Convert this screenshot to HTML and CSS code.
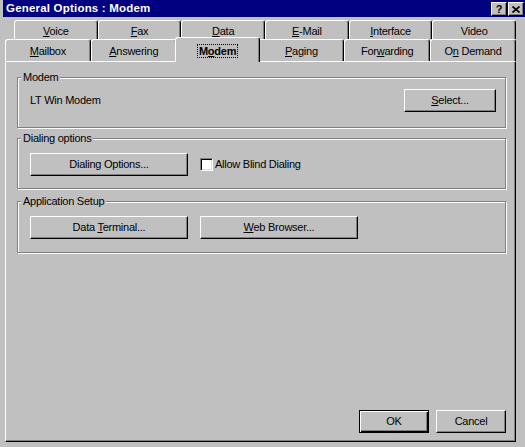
FILE: index.html
```html
<!DOCTYPE html>
<html>
<head>
<meta charset="utf-8">
<title>General Options : Modem</title>
<link rel="stylesheet" href="styles.css">
</head>
<body>
<div class="window">
  <div class="titlebar">
    <span class="title">General Options : Modem</span>
    <div class="tb-buttons">
      <span class="tb-btn">?</span>
      <span class="tb-btn"><svg width="8" height="7" viewBox="0 0 8 7"><path d="M0.5 0.5 L7.5 6.5 M7.5 0.5 L0.5 6.5" stroke="#000" stroke-width="1.6" fill="none"/></svg></span>
    </div>
  </div>
  <div class="tabs">
    <div class="tabrow back">
      <div class="tab"><u>V</u>oice</div>
      <div class="tab"><u>F</u>ax</div>
      <div class="tab"><u>D</u>ata</div>
      <div class="tab"><u>E</u>-Mail</div>
      <div class="tab"><u>I</u>nterface</div>
      <div class="tab">Video</div>
    </div>
    <div class="tabrow front">
      <div class="tab"><u>M</u>ailbox</div>
      <div class="tab"><u>A</u>nswering</div>
      <div class="tab active"><span class="focus">M<u>o</u>dem</span></div>
      <div class="tab"><u>P</u>aging</div>
      <div class="tab">For<u>w</u>arding</div>
      <div class="tab">O<u>n</u> Demand</div>
    </div>
  </div>
  <div class="panel">
    <fieldset class="group g1">
      <legend>Modem</legend>
      <div class="row spread">
        <span class="label">LT Win Modem</span>
        <button class="btn btn-select"><span><u>S</u>elect...</span></button>
      </div>
    </fieldset>
    <fieldset class="group g2">
      <legend>Dialing options</legend>
      <div class="row">
        <button class="btn btn-wide"><span>Dialing Options...</span></button>
        <label class="check"><span class="box"></span><span>Allow Blind Dialing</span></label>
      </div>
    </fieldset>
    <fieldset class="group g3">
      <legend>Application Setup</legend>
      <div class="row">
        <button class="btn btn-wide"><span>Data <u>T</u>erminal...</span></button>
        <button class="btn btn-wide"><span><u>W</u>eb Browser...</span></button>
      </div>
    </fieldset>
    <div class="footer">
      <button class="btn btn-footer btn-default"><span>OK</span></button>
      <button class="btn btn-footer"><span>Cancel</span></button>
    </div>
  </div>
</div>
</body>
</html>
```
FILE: styles.css
```css
* { box-sizing: border-box; }

body {
  margin: 0;
  background: #c0c0c0;
  font-family: "Liberation Sans", Arial, sans-serif;
  font-size: 11px;
  line-height: 13px;
  letter-spacing: -0.25px;
  color: #000;
}

.window {
  width: 525px;
  height: 447px;
  overflow: hidden;
  display: flex;
  flex-direction: column;
}

/* Title bar */
.titlebar {
  height: 17px;
  margin-left: 3px;
  background: #000080;
  color: #fff;
  display: flex;
  justify-content: space-between;
  align-items: flex-start;
  padding: 2px 1px 0 3px;
}

.title {
  font-weight: bold;
  font-size: 11.5px;
  line-height: 13px;
  letter-spacing: 0.2px;
}

.tb-buttons {
  display: flex;
  gap: 1px;
}

.tb-btn {
  width: 16px;
  height: 14px;
  background: #c0c0c0;
  border: 1px solid;
  border-color: #fff #000 #000 #fff;
  box-shadow: inset -1px -1px #808080;
  display: flex;
  align-items: center;
  justify-content: center;
  color: #000;
  font-weight: bold;
  font-size: 11px;
  line-height: 11px;
  letter-spacing: 0;
}

/* Tabs */
.tabs {
  display: flex;
  flex-direction: column;
  margin-top: 3px;
}

.tabrow {
  display: flex;
}

.tabrow.back {
  margin-left: 14px;
  width: 502px;
  height: 19px;
}

.tabrow.front {
  margin-left: 5px;
  width: 511px;
  height: 22px;
}

.tab {
  flex: 1 1 0;
  border: 1px solid;
  border-bottom: 0;
  border-color: #fff #000 #000 #fff;
  border-radius: 3px 3px 0 0;
  box-shadow: inset -1px 0 #808080;
  background: #c0c0c0;
  text-align: center;
  padding-top: 4px;
  white-space: nowrap;
}

.front .tab {
  padding-top: 5px;
}

.front .tab.active {
  margin: -2px -2px -1px;
  position: relative;
  z-index: 1;
  padding-top: 6px;
  font-weight: bold;
}

.focus {
  display: inline-block;
  border: 1px dotted #000;
  padding: 0 1px;
  line-height: 12px;
}

/* Panel */
.panel {
  margin-left: 5px;
  width: 511px;
  height: 381px;
  border: 1px solid;
  border-color: #fff #000 #000 #fff;
  box-shadow: inset -1px -1px #808080;
  padding-top: 9px;
  display: flex;
  flex-direction: column;
}

.group {
  margin: 0 9px 0 11px;
  padding: 0;
  min-width: 0;
  border: 1px solid #808080;
  box-shadow: 1px 1px 0 #fff, inset 1px 1px 0 #fff;
}

.group legend {
  margin-left: 3px;
  padding: 0 2px;
  background: #c0c0c0;
  line-height: 13px;
}

.g2 { margin-top: 4px; }
.g3 { margin-top: 6px; }

.row {
  display: flex;
  align-items: center;
  gap: 12px;
  padding: 8px 9px 12px 12px;
}

.g1 .row {
  justify-content: space-between;
  padding: 5px 9px 15px 12px;
}

.g3 .row {
  padding-bottom: 13px;
}

.btn {
  height: 23px;
  padding: 0;
  margin: 0;
  font: inherit;
  letter-spacing: inherit;
  color: #000;
  background: #c0c0c0;
  border: 1px solid;
  border-color: #fff #000 #000 #fff;
  box-shadow: inset -1px -1px #808080;
  border-radius: 0;
  display: flex;
  align-items: center;
  justify-content: center;
}

.btn-select { width: 92px; }
.btn-wide { width: 158px; }

.check {
  display: flex;
  align-items: center;
  gap: 2px;
}

.box {
  width: 13px;
  height: 13px;
  background: #fff;
  border: 1px solid;
  border-color: #808080 #fff #fff #808080;
  box-shadow: inset 1px 1px #000, inset -1px -1px #dfdfdf;
}

.footer {
  margin-top: auto;
  display: flex;
  justify-content: flex-end;
  align-items: center;
  gap: 7px;
  padding: 0 9px 8px 0;
}

.btn-footer {
  width: 70px;
  height: 23px;
}

.btn-default {
  border: 1px solid #000;
  box-shadow: inset 1px 1px #fff, inset -1px -1px #000, inset -2px -2px #808080;
}
```
